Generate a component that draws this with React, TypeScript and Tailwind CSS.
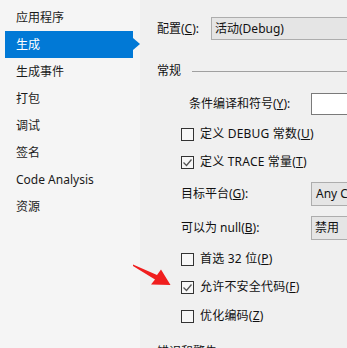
import React from "react";

const font = { fontFamily: '"Noto Sans", "Noto Sans CJK SC", sans-serif' };

function Cb({ checked, label, u, rest }: { checked?: boolean; label: string; u: string; rest?: string }) {
  return (
    <div className="flex items-center h-[28px] pl-[24px]">
      <div className="w-[13px] h-[13px] border border-[#333333] bg-[#f7f7f7] flex items-center justify-center">
        {checked && (
          <svg width="11" height="11" viewBox="0 0 11 11">
            <polyline points="1.5,5.5 4.5,8.5 9.5,2.5" fill="none" stroke="#555" strokeWidth="1.3" />
          </svg>
        )}
      </div>
      <span className="ml-[6px] text-[12px] text-[#111] tracking-[0.2px]">
        {label}(<u>{u}</u>){rest}
      </span>
    </div>
  );
}

export default function App() {
  const items = ["应用程序", "生成", "生成事件", "打包", "调试", "签名", "Code Analysis", "资源"];
  return (
    <div className="w-[347px] h-[348px] flex overflow-hidden relative bg-[#f0f0f0]" style={font}>
      <div className="w-[140px] shrink-0 bg-[#f5f5f5] pt-[4px]">
        {items.map((t) =>
          t === "生成" ? (
            <div key={t} className="h-[27px] ml-[5px] w-[128px] bg-[#0179d6] flex items-center pl-[11px] text-white text-[12px] relative">
              {t}
              <div className="absolute right-[-7px] top-[7px] w-0 h-0 border-y-[6px] border-y-transparent border-l-[7px] border-l-[#0179d6]" />
            </div>
          ) : (
            <div key={t} className="h-[27px] flex items-center pl-[16px] text-[12px] text-[#1b1b1b]">
              {t}
            </div>
          )
        )}
      </div>
      <div className="flex-1 flex flex-col pl-[17px] min-w-0">
        <div className="mt-[17px] h-[23px] flex items-center">
          <span className="w-[54px] shrink-0 text-[12px] text-[#111]">
            配置(<u>C</u>):
          </span>
          <div className="h-[23px] w-[200px] shrink-0 bg-[#e5e5e5] border border-[#adadad] flex items-center pl-[3px] text-[12px] text-[#111]">
            活动(Debug)
          </div>
        </div>
        <div className="mt-[16px] h-px bg-[#a0a0a0] ml-[-2px]" />
        <div className="mt-[7px] h-[16px] flex items-center">
          <span className="text-[12px] text-[#111]">常规</span>
          <div className="ml-[11px] flex-1 h-px bg-[#a0a0a0]" />
        </div>
        <div className="mt-[14px] h-[22px] flex items-center pl-[32px]">
          <span className="w-[122px] shrink-0 text-[12px] text-[#111]">
            条件编译和符号(<u>Y</u>):
          </span>
          <div className="h-[22px] w-[100px] shrink-0 bg-white border border-[#7a7a7a]" />
        </div>
        <div className="mt-[5px]">
          <Cb label="定义 DEBUG 常数" u="U" />
          <Cb checked label="定义 TRACE 常量" u="T" />
        </div>
        <div className="mt-[6px] h-[24px] flex items-center pl-[24px]">
          <span className="w-[130px] shrink-0 text-[12px] text-[#111]">
            目标平台(<u>G</u>):
          </span>
          <div className="h-[24px] w-[100px] shrink-0 bg-[#e5e5e5] border border-[#adadad] flex items-center pl-[4px] text-[12px] text-[#111]">
            Any CPU
          </div>
        </div>
        <div className="mt-[10px] h-[24px] flex items-center pl-[24px]">
          <span className="w-[130px] shrink-0 text-[12px] text-[#111]">
            可以为 null(<u>B</u>):
          </span>
          <div className="h-[24px] w-[100px] shrink-0 bg-[#e5e5e5] border border-[#adadad] flex items-center pl-[3px] text-[12px] text-[#111]">
            禁用
          </div>
        </div>
        <div className="mt-[5px]">
          <Cb label="首选 32 位" u="P" />
          <Cb checked label="允许不安全代码" u="F" />
          <div className="mt-[1px]">
            <Cb label="优化编码" u="Z" />
          </div>
        </div>
        <div className="mt-[14px] h-[16px] flex items-center text-[12px] text-[#111]">错误和警告</div>
      </div>
      <svg className="absolute left-0 top-0 pointer-events-none" width="347" height="348" viewBox="0 0 347 348">
        <polygon points="133,264.5 157,275 161,269.5 170.5,285 151,284.5 155,279.5 133,266" fill="#f01e1e" />
      </svg>
    </div>
  );
}
